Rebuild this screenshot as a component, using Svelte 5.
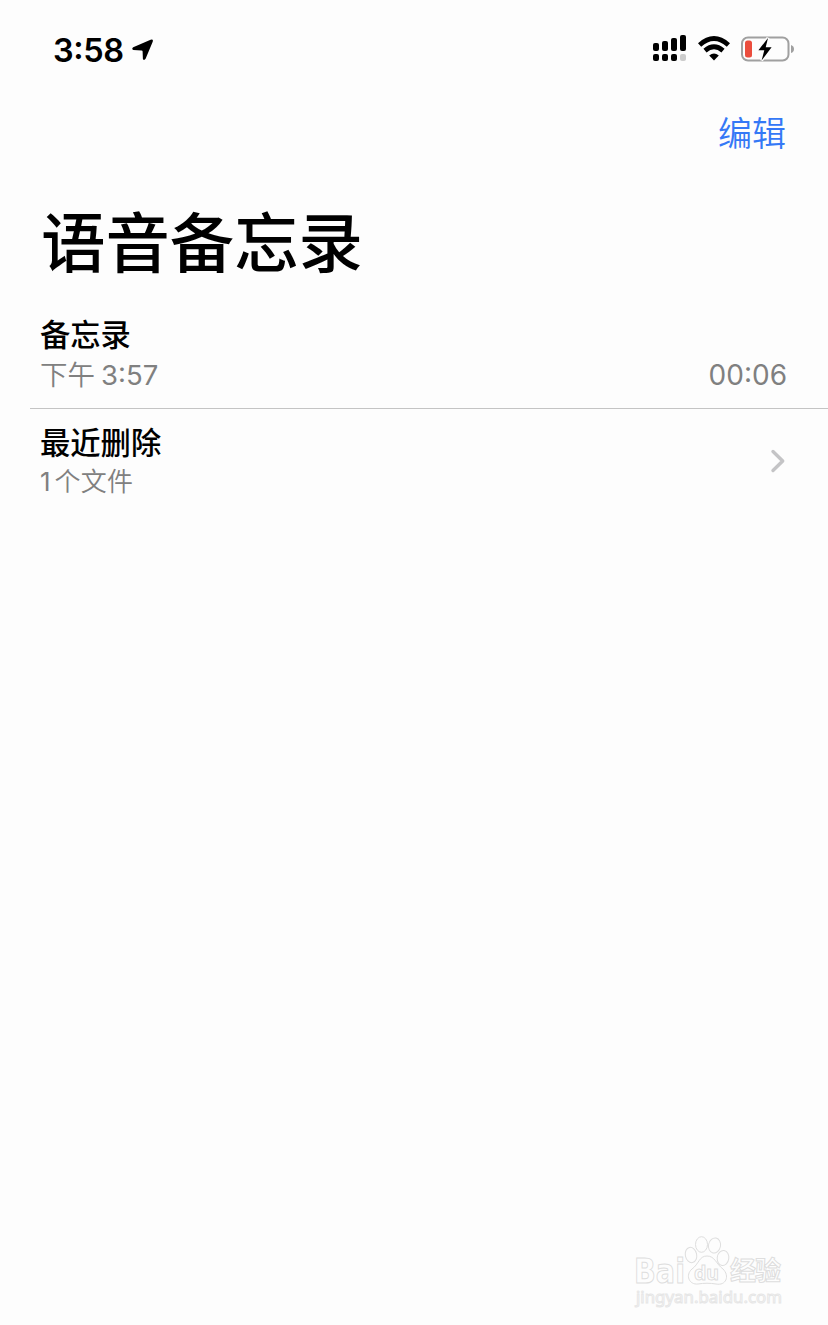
<script>
    const title = "语音备忘录";

    let memos = [
        { id: 1, name: "备忘录", period: "下午", time: "3:57", duration: "00:06" }
    ];

    let deleted = { name: "最近删除", count: 1 };

    // Barres du signal (deuxième SIM en dessous)
    const bars = [
        { x: 0, y: 8, h: 8 },
        { x: 9, y: 6, h: 10 },
        { x: 18, y: 3, h: 13 },
        { x: 27, y: 0, h: 16 }
    ];
</script>

<div class="screen">
    <header class="status">
        <div class="clock">
            <span>3:58</span>
            <svg width="22" height="22" viewBox="0 0 22 22">
                <path
                    d="M1.2 8.2 18.6 .7Q21.6 -.2 20.7 2.8L13.6 19.8Q12 22 10.9 20L10.6 12.4Q10.6 11.5 9.6 11.4L1.4 11Q-.8 9.8 1.2 8.2Z"
                />
            </svg>
        </div>
        <div class="indicators">
            <svg width="34" height="27" viewBox="0 0 34 27">
                {#each bars as bar}
                    <rect x={bar.x} y={bar.y} width="6" height={bar.h} rx="2" />
                    <rect x={bar.x} y="19" width="6" height="7" rx="2" class:off={bar.x === 27} />
                {/each}
            </svg>
            <svg class="wifi" width="32" height="25" viewBox="0 0 32 25">
                <path d="M1.6 9Q16-3.8 30.4 9" />
                <path d="M7 14.6Q16 7 25 14.6" />
                <path class="dot" d="M11.2 19.5Q16 15.4 20.8 19.5L16 24.5Z" />
            </svg>
            <svg class="battery" width="53" height="26" viewBox="0 0 53 26">
                <rect class="shell" x="1" y="1.5" width="46.5" height="23" rx="6" />
                <path class="cap" d="M50 9Q53 10 53 13T50 17Z" />
                <rect class="level" x="4" y="4.5" width="7" height="17" rx="2.5" />
                <path class="bolt" d="M27 2 17.4 14.3H23.3L20.6 24.4 30.6 11.3H24.7Z" />
            </svg>
        </div>
    </header>

    <nav>
        <button>编辑</button>
    </nav>

    <h1>{title}</h1>

    <main>
        {#each memos as memo (memo.id)}
            <div class="row memo">
                <div>
                    <h2>{memo.name}</h2>
                    <p><span class="period">{memo.period}</span>{memo.time}</p>
                </div>
                <span class="duration">{memo.duration}</span>
            </div>
        {/each}
        <div class="row trash">
            <div>
                <h2>{deleted.name}</h2>
                <p class="count">{deleted.count}<span>个文件</span></p>
            </div>
            <svg class="chevron" width="16" height="24" viewBox="0 0 16 24">
                <path d="M3 2.5 12.7 12 3 21.5" />
            </svg>
        </div>
    </main>

    <svg class="watermark" width="152" height="76" viewBox="0 0 152 76">
        <text class="latin" x="1" y="50" textLength="51" lengthAdjust="spacingAndGlyphs">Bai</text>
        <ellipse cx="58" cy="22" rx="5.7" ry="7.7" transform="rotate(-12 58 22)" />
        <ellipse cx="68.5" cy="11.5" rx="6" ry="7.8" />
        <ellipse cx="81.5" cy="12.5" rx="6" ry="7.6" transform="rotate(12 81.5 12.5)" />
        <ellipse cx="90" cy="25" rx="5.8" ry="7.5" transform="rotate(8 90 25)" />
        <path d="M74 23C66 23 66 31 59 36C52 42 56 52 65 51C71 50 77 50 83 51C93 53 97 43 90 36C83 31 82 23 74 23Z" />
        <text class="du" x="61" y="46.5" textLength="25" lengthAdjust="spacingAndGlyphs">du</text>
        <text class="cjk" x="97" y="47" textLength="51">经验</text>
        <text class="url" x="3" y="69.5" textLength="146" lengthAdjust="spacingAndGlyphs">jingyan.baidu.com</text>
    </svg>
</div>

<style>
    :global(body) {
        margin: 0;
        background: #fdfdfd;
    }

    .screen {
        position: relative;
        box-sizing: border-box;
        height: 1325px;
        overflow: hidden;
        background: #fdfdfd;
        color: #000;
        font-family: Inter, "Noto Sans CJK SC", sans-serif;
    }

    .status {
        display: flex;
        justify-content: space-between;
        align-items: center;
        height: 100px;
        padding: 0 34px 0 53px;
    }

    .clock {
        display: flex;
        align-items: center;
        gap: 8px;
        font-size: 32.5px;
        font-weight: 600;
        letter-spacing: -0.4px;
        font-feature-settings: "case";
    }

    .indicators {
        display: flex;
        align-items: center;
        gap: 11px;
        margin-top: -3px;
    }

    .off {
        fill: #ccc;
    }

    .wifi path {
        fill: none;
        stroke: #000;
        stroke-width: 4.8;
    }

    .wifi .dot {
        fill: #000;
        stroke: none;
    }

    .shell {
        fill: none;
        stroke: #a0a0a0;
        stroke-width: 2;
    }

    .cap {
        fill: #a0a0a0;
    }

    .level {
        fill: #eb4d3d;
    }

    .bolt {
        stroke: #fdfdfd;
        stroke-width: 3;
        paint-order: stroke;
    }

    nav {
        display: flex;
        justify-content: flex-end;
        height: 64px;
        padding-right: 42px;
    }

    button {
        border: 0;
        padding: 0;
        background: none;
        color: #3478f6;
        font: 350 34px/64px "Noto Sans CJK SC", sans-serif;
    }

    h1 {
        margin: 34px 0 0 41px;
        font-size: 64.4px;
        font-weight: 500;
        line-height: 92px;
    }

    h2 {
        margin: 0;
        font-size: 30.3px;
        font-weight: 500;
        line-height: 40px;
    }

    p {
        margin: 0;
        color: #808080;
        font-size: 27.5px;
        line-height: 40px;
        font-feature-settings: "case";
    }

    p span {
        font-weight: 350;
    }

    main {
        padding: 25px 0 0 30px;
    }

    .row {
        display: flex;
        justify-content: space-between;
        padding: 0 42px 0 10px;
    }

    .memo {
        align-items: flex-end;
        height: 94px;
        box-sizing: border-box;
        padding-right: 41px;
        padding-bottom: 13px;
        border-bottom: 1px solid #c4c4c4;
    }

    .period {
        margin-right: 6px;
    }

    .duration {
        color: #808080;
        font-size: 28px;
        line-height: 40px;
        font-feature-settings: "case";
    }

    .trash {
        align-items: center;
        padding-top: 14px;
    }

    .count {
        font-size: 26px;
        line-height: 37px;
    }

    .count span {
        margin-left: 4px;
        letter-spacing: 0.2px;
    }

    .chevron {
        margin-top: -2px;
    }

    .chevron path {
        fill: none;
        stroke: #c4c4c6;
        stroke-width: 3.4;
        stroke-linecap: round;
        stroke-linejoin: round;
    }

    .watermark {
        position: absolute;
        left: 633px;
        top: 1233px;
        fill: #fdfdfd;
        stroke: #dedede;
        stroke-width: 1;
    }

    .latin {
        font: bold 33px "DejaVu Sans", sans-serif;
    }

    .du {
        font: bold 20px "Noto Sans", sans-serif;
    }

    .cjk {
        font: bold 26px "Noto Sans CJK SC", sans-serif;
    }

    .url {
        font: 17px "Noto Sans", sans-serif;
        stroke: #e6e6e6;
    }
</style>
